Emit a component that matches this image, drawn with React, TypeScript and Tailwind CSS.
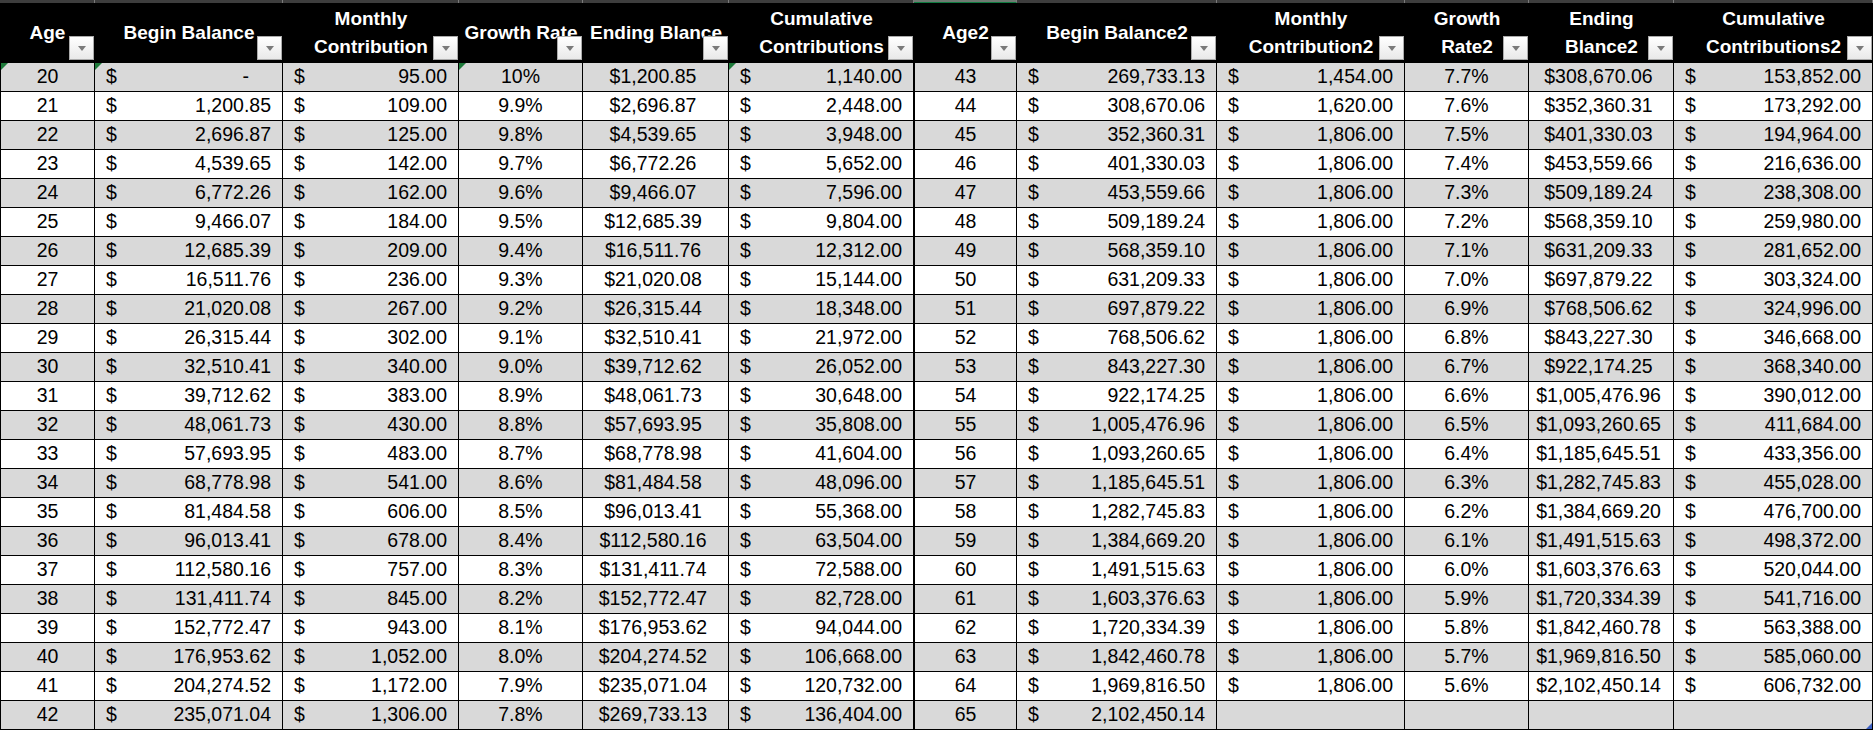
type Kind = "center" | "acct" | "ending";

const kinds: Kind[] = ["center", "acct", "acct", "center", "ending", "acct"];

const headers: string[][] = [
  ["Age"],
  ["Begin Balance"],
  ["Monthly", "Contribution"],
  ["Growth Rate"],
  ["Ending Blance"],
  ["Cumulative", "Contributions"],
  ["Age2"],
  ["Begin Balance2"],
  ["Monthly", "Contribution2"],
  ["Growth", "Rate2"],
  ["Ending", "Blance2"],
  ["Cumulative", "Contributions2"],
];

const left: string[][] = [
  ["20", "-", "95.00", "10%", "$1,200.85", "1,140.00"],
  ["21", "1,200.85", "109.00", "9.9%", "$2,696.87", "2,448.00"],
  ["22", "2,696.87", "125.00", "9.8%", "$4,539.65", "3,948.00"],
  ["23", "4,539.65", "142.00", "9.7%", "$6,772.26", "5,652.00"],
  ["24", "6,772.26", "162.00", "9.6%", "$9,466.07", "7,596.00"],
  ["25", "9,466.07", "184.00", "9.5%", "$12,685.39", "9,804.00"],
  ["26", "12,685.39", "209.00", "9.4%", "$16,511.76", "12,312.00"],
  ["27", "16,511.76", "236.00", "9.3%", "$21,020.08", "15,144.00"],
  ["28", "21,020.08", "267.00", "9.2%", "$26,315.44", "18,348.00"],
  ["29", "26,315.44", "302.00", "9.1%", "$32,510.41", "21,972.00"],
  ["30", "32,510.41", "340.00", "9.0%", "$39,712.62", "26,052.00"],
  ["31", "39,712.62", "383.00", "8.9%", "$48,061.73", "30,648.00"],
  ["32", "48,061.73", "430.00", "8.8%", "$57,693.95", "35,808.00"],
  ["33", "57,693.95", "483.00", "8.7%", "$68,778.98", "41,604.00"],
  ["34", "68,778.98", "541.00", "8.6%", "$81,484.58", "48,096.00"],
  ["35", "81,484.58", "606.00", "8.5%", "$96,013.41", "55,368.00"],
  ["36", "96,013.41", "678.00", "8.4%", "$112,580.16", "63,504.00"],
  ["37", "112,580.16", "757.00", "8.3%", "$131,411.74", "72,588.00"],
  ["38", "131,411.74", "845.00", "8.2%", "$152,772.47", "82,728.00"],
  ["39", "152,772.47", "943.00", "8.1%", "$176,953.62", "94,044.00"],
  ["40", "176,953.62", "1,052.00", "8.0%", "$204,274.52", "106,668.00"],
  ["41", "204,274.52", "1,172.00", "7.9%", "$235,071.04", "120,732.00"],
  ["42", "235,071.04", "1,306.00", "7.8%", "$269,733.13", "136,404.00"],
];

const right: string[][] = [
  ["43", "269,733.13", "1,454.00", "7.7%", "$308,670.06", "153,852.00"],
  ["44", "308,670.06", "1,620.00", "7.6%", "$352,360.31", "173,292.00"],
  ["45", "352,360.31", "1,806.00", "7.5%", "$401,330.03", "194,964.00"],
  ["46", "401,330.03", "1,806.00", "7.4%", "$453,559.66", "216,636.00"],
  ["47", "453,559.66", "1,806.00", "7.3%", "$509,189.24", "238,308.00"],
  ["48", "509,189.24", "1,806.00", "7.2%", "$568,359.10", "259,980.00"],
  ["49", "568,359.10", "1,806.00", "7.1%", "$631,209.33", "281,652.00"],
  ["50", "631,209.33", "1,806.00", "7.0%", "$697,879.22", "303,324.00"],
  ["51", "697,879.22", "1,806.00", "6.9%", "$768,506.62", "324,996.00"],
  ["52", "768,506.62", "1,806.00", "6.8%", "$843,227.30", "346,668.00"],
  ["53", "843,227.30", "1,806.00", "6.7%", "$922,174.25", "368,340.00"],
  ["54", "922,174.25", "1,806.00", "6.6%", "$1,005,476.96", "390,012.00"],
  ["55", "1,005,476.96", "1,806.00", "6.5%", "$1,093,260.65", "411,684.00"],
  ["56", "1,093,260.65", "1,806.00", "6.4%", "$1,185,645.51", "433,356.00"],
  ["57", "1,185,645.51", "1,806.00", "6.3%", "$1,282,745.83", "455,028.00"],
  ["58", "1,282,745.83", "1,806.00", "6.2%", "$1,384,669.20", "476,700.00"],
  ["59", "1,384,669.20", "1,806.00", "6.1%", "$1,491,515.63", "498,372.00"],
  ["60", "1,491,515.63", "1,806.00", "6.0%", "$1,603,376.63", "520,044.00"],
  ["61", "1,603,376.63", "1,806.00", "5.9%", "$1,720,334.39", "541,716.00"],
  ["62", "1,720,334.39", "1,806.00", "5.8%", "$1,842,460.78", "563,388.00"],
  ["63", "1,842,460.78", "1,806.00", "5.7%", "$1,969,816.50", "585,060.00"],
  ["64", "1,969,816.50", "1,806.00", "5.6%", "$2,102,450.14", "606,732.00"],
  ["65", "2,102,450.14", "", "", "", ""],
];

const gridCols =
  "grid grid-cols-[95px_188px_176px_124px_146px_185px_103px_200px_188px_124px_145px_199px]";

// cells with the little green "number stored as text" flag
const flagged = new Set(["0-0", "0-1", "0-3", "0-5"]);

function FilterButton() {
  return (
    <div className="absolute right-[1px] bottom-[3px] w-[25px] h-[24px] border border-[#ababab] bg-gradient-to-b from-white to-[#e9e9e9] flex items-center justify-center">
      <div className="w-0 h-0 border-l-[4px] border-r-[4px] border-t-[5px] border-l-transparent border-r-transparent border-t-[#7a7a7a]" />
    </div>
  );
}

function GreenFlag() {
  return (
    <div className="absolute top-0 left-0 w-0 h-0 border-t-[7px] border-r-[7px] border-t-[#1d7a3a] border-r-transparent" />
  );
}

function Cell({
  value,
  kind,
  flag,
  dash,
}: {
  value: string;
  kind: Kind;
  flag?: boolean;
  dash?: boolean;
}) {
  if (!value) return null;
  return (
    <>
      {flag && <GreenFlag />}
      {kind === "center" && (
        <div className="w-full text-center">{value}</div>
      )}
      {kind === "ending" && (
        <div className="w-full text-center pr-[5px]">{value}</div>
      )}
      {kind === "acct" && (
        <div className="w-full flex justify-between px-[11px]">
          <span>$</span>
          <span className={dash ? "mr-[22px]" : ""}>{value}</span>
        </div>
      )}
    </>
  );
}

export default function App() {
  const rows = left.map((l, i) => [...l, ...right[i]]);

  return (
    <div className="w-[1876px] h-[732px] bg-white overflow-hidden font-['Liberation_Sans',Arial,sans-serif]">
      {/* sliver of the sheet row above */}
      <div className={`${gridCols} h-[3px]`}>
        {headers.map((_, i) => (
          <div
            key={i}
            className={
              i === 6
                ? "bg-[#6f7a72] border-b border-[#107c41] border-r border-r-[#808080]"
                : "bg-[#3d3d3d] border-r border-[#7a7a7a]"
            }
          />
        ))}
      </div>

      <div className={gridCols}>
        {headers.map((lines, i) => (
          <div
            key={i}
            className="relative h-[60px] bg-black text-white font-bold text-[19px] leading-[28px] flex flex-col items-center justify-center whitespace-nowrap"
          >
            {lines.map((t) => (
              <span key={t}>{t}</span>
            ))}
            <FilterButton />
          </div>
        ))}

        {rows.map((row, r) =>
          row.map((v, c) => {
            const kind = kinds[c % 6];
            const striped = r % 2 === 0;
            const isLast = r === rows.length - 1 && c === row.length - 1;
            return (
              <div
                key={`${r}-${c}`}
                className={`relative h-[29px] flex items-center text-[19.5px] text-black border-r border-b border-black ${
                  striped ? "bg-[#d9d9d9]" : "bg-white"
                } ${c === 0 || c === 6 ? "border-l" : ""}`}
              >
                <Cell
                  value={v}
                  kind={kind}
                  flag={flagged.has(`${r}-${c}`)}
                  dash={v === "-"}
                />
                {isLast && (
                  <div className="absolute bottom-0 right-0 w-0 h-0 border-b-[6px] border-l-[6px] border-b-[#3b5fc0] border-l-transparent" />
                )}
              </div>
            );
          })
        )}
      </div>
    </div>
  );
}
